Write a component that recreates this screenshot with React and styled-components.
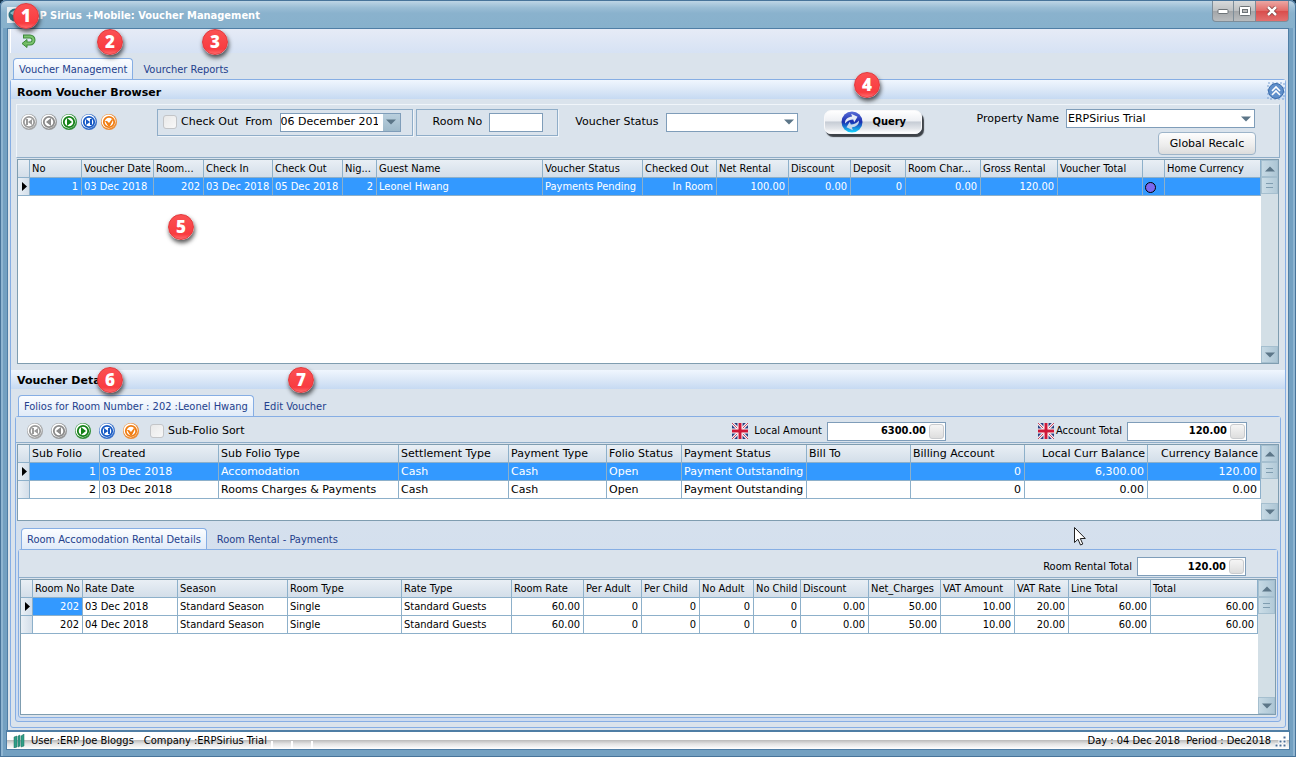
import React from "react";
import styled, { createGlobalStyle } from "styled-components";

const condensed = `"DejaVu Sans Condensed", "Noto Sans", sans-serif`;
const wide = `"DejaVu Sans", sans-serif`;

const GlobalStyle = createGlobalStyle`
  * {
    box-sizing: border-box;
  }
  body {
    margin: 0;
    background: #14324a;
    color: #000;
    font-family: ${condensed};
    font-size: 11px;
    line-height: 14px;
  }
  button, input, select {
    margin: 0;
    padding: 0;
    color: inherit;
    font: inherit;
  }
`;

const Window = styled.div`
  position: relative;
  display: flex;
  flex-direction: column;
  min-height: 100vh;
  padding: 0 7px 8px;
  border-radius: 6px 6px 0 0;
  background: #73a0c1;
  box-shadow: inset 0 0 0 1px #48749a, inset 2px 0 0 1px #8fb5d1,
    inset -2px 0 0 1px #8fb5d1;
`;
const TitleBar = styled.header`
  display: flex;
  align-items: flex-start;
  height: 28px;
  margin: 0 -6px;
  padding: 0 6px;
  border-top: 1px solid #48749a;
  border-radius: 6px 6px 0 0;
  background: linear-gradient(#bdd5e5, #9abdd5 25%, #8ab2cd 45%, #87b1cc);
`;
const Title = styled.h1`
  flex: 1;
  margin: 8px 0 0 2px;
  color: #fff;
  font-size: 11px;
  font-weight: bold;
  line-height: 14px;
`;
const AppIcon = styled.svg`
  width: 16px;
  height: 16px;
  margin-top: 6px;
`;
const WindowButton = styled.button`
  display: flex;
  align-items: center;
  justify-content: center;
  width: ${props => (props.$close ? "33px" : "22px")};
  height: 21px;
  border: 1px solid #7d8d99;
  border-top: 0;
  border-left-width: ${props => (props.$first ? "1px" : "0")};
  border-radius: ${props =>
    props.$close ? "0 0 4px 0" : props.$first ? "0 0 0 4px" : "0"};
  background: ${props =>
    props.$close
      ? "linear-gradient(#eba7a3, #e26a67 50%, #d94e4d 52%, #e2706f)"
      : "linear-gradient(#d8dadb, #bcbfc1 50%, #a3a6a9 52%, #b9bcbe)"};
`;

const Client = styled.main`
  display: flex;
  flex: 1;
  flex-direction: column;
  padding-bottom: 3px;
  border: 1px solid #4f7ea5;
  border-bottom: 0;
  background: #dae3ec;
`;
const Toolbar = styled.div`
  display: flex;
  align-items: center;
  height: 24px;
  margin-left: 2px;
  padding-left: 10px;
  border-left: 1px solid #fff;
  background: linear-gradient(#e6ebf6, #d6e2f4);
`;
const IconButton = styled.button`
  display: flex;
  width: 16px;
  height: 16px;
  border: 0;
  border-radius: 8px;
  background: none;
`;

const TabBar = styled.nav`
  display: flex;
  align-items: flex-end;
  height: ${props => props.$height}px;
  padding-left: ${props => props.$indent}px;
`;
const Tab = styled.button`
  height: 22px;
  margin-bottom: -1px;
  padding: ${props => (props.$active ? "1px 5px 0" : "1px 9px 0")};
  border: 1px solid ${props => (props.$active ? "#86aee4" : "transparent")};
  border-bottom: 0;
  border-radius: 4px 4px 0 0;
  background: ${props =>
    props.$active ? "linear-gradient(#fbfdff, #dfeaf8)" : "none"};
  color: #24418c;
  white-space: nowrap;
`;
const Pages = styled.section`
  display: flex;
  flex: ${props => (props.$grow ? "1" : "none")};
  flex-direction: column;
  margin: 0 ${props => props.$inset}px;
  padding-bottom: ${props => props.$foot}px;
  border: 1px solid #86aee4;
  border-radius: 3px;
  background: ${props => props.$back || "#dae3ec"};
  box-shadow: inset 0 1px 0 #eef4fc;
`;
const Band = styled.h2`
  height: 19px;
  margin: 0;
  padding: 6px 6px 0;
  background: linear-gradient(#f0f6fe, #dce8f7 50%, #c6daf2);
  font-family: ${wide};
  font-size: 11px;
  font-weight: bold;
  line-height: 14px;
`;
const DetailsHeading = styled(Band)`
  margin-top: 6px;
  padding-top: 4px;
`;
const BrowserHeader = styled.div`
  display: flex;
  justify-content: space-between;
  height: 19px;
  background: linear-gradient(#f0f6fe, #dce8f7 50%, #c6daf2);

  h2 {
    background: none;
  }
`;
const CollapseButton = styled.button`
  width: 18px;
  height: 18px;
  margin-top: 2px;
  border: 0;
  background: none;
`;

const Filters = styled.form`
  display: flex;
  align-items: flex-start;
  height: 54px;
  margin: 5px 5px 0;
  padding: 3px 23px 0 4px;
  border: 1px solid #8fadc8;
  border-top-color: #f0f5fa;
  border-left-color: #f0f5fa;
  font-family: ${wide};
`;
const FilterRow = styled.div`
  display: flex;
  flex: 1;
  align-items: center;
  height: 28px;
`;
const Navigator = styled.div`
  display: flex;
  gap: ${props => props.$gap}px;
`;
const Group = styled.div`
  display: flex;
  align-items: center;
  height: 27px;
  margin-left: ${props => (props.$first ? "40px" : "3px")};
  padding: ${props => (props.$first ? "0 11px 0 5px" : "0 14px 0 16px")};
  border: 1px solid #8fadc8;
  box-shadow: 1px 1px 0 #f0f5fa;
`;
const Label = styled.label`
  white-space: nowrap;
  margin-right: ${props => (props.$tight ? "5px" : "7px")};
`;
const Check = styled.input.attrs({ type: "checkbox" })`
  width: 14px;
  height: 14px;
  margin-right: 4px;
  appearance: none;
  border: 1px solid #c3c5c8;
  border-radius: 3px;
  background: linear-gradient(135deg, #e9e9e9, #f8f8f8);
`;
const DateBox = styled.div`
  display: flex;
  width: 121px;
  height: 19px;
  border: 1px solid #7f9db9;
  background: #fff;

  input {
    flex: 1;
    min-width: 0;
    padding-right: 5px;
    border: 0;
    background: none;
  }
`;
const DropButton = styled.button`
  width: 17px;
  border: 0;
  background: linear-gradient(#b9cfdd, #9fbacb);
`;
const TextBox = styled.input`
  width: 54px;
  height: 19px;
  border: 1px solid #7f9db9;
  background: #fff;
`;
const SelectBox = styled.div`
  display: flex;
  align-items: center;
  width: ${props => props.$width}px;
  height: 19px;
  padding-right: 3px;
  border: 1px solid #7f9db9;
  background: #fff;

  select {
    flex: 1;
    min-width: 0;
    height: 17px;
    padding-left: 1px;
    appearance: none;
    border: 0;
    background: none;
  }
`;
const StatusField = styled.div`
  display: flex;
  align-items: center;
  margin-left: 17px;
`;
const QueryButton = styled.button`
  display: flex;
  align-items: center;
  gap: 10px;
  width: 98px;
  height: 24px;
  margin-left: 26px;
  padding-left: 16px;
  border: 1px solid #f8f8fa;
  border-radius: 7px;
  background: linear-gradient(#fff, #eef0f4 45%, #c6ccd5 50%, #e2e5ea 80%, #fff);
  box-shadow: 2px 3px 1px #3d4248;
  font-family: ${condensed};
  font-weight: bold;
`;
const PropertyColumn = styled.div`
  display: flex;
  flex-direction: column;
  align-items: flex-end;
  gap: 4px;
  padding-top: 1px;
`;
const PropertyField = styled.div`
  display: flex;
  align-items: center;
  padding-right: 1px;
`;
const RecalcButton = styled.button`
  width: 98px;
  height: 23px;
  border: 1px solid #9db4c9;
  border-radius: 4px;
  background: linear-gradient(#fdfdfd, #ececec 60%, #dcdcdc);
`;

const GridFrame = styled.div`
  display: flex;
  flex: ${props => (props.$height ? "none" : "1")};
  min-height: ${props => props.$height || 120}px;
  margin: 1px ${props => props.$inset}px 0;
  border: 1px solid #7f9db0;
  background: #fff;
`;
const GridBody = styled.div`
  flex: 1;
  min-width: 0;
`;
const Table = styled.table`
  width: 100%;
  table-layout: fixed;
  border-collapse: separate;
  border-spacing: 0;
  font-family: ${props => (props.$wide ? wide : condensed)};
`;
const HeadCell = styled.th`
  height: 18px;
  padding: 1px ${props => (props.$right ? "2px" : "0")} 0 2px;
  overflow: hidden;
  border-right: 1px solid #8db0ca;
  border-bottom: 1px solid #8db0ca;
  background: linear-gradient(#e9eff5, #d3dee9);
  font-weight: normal;
  text-align: ${props => (props.$right ? "right" : "left")};
  text-overflow: ellipsis;
  white-space: nowrap;
`;
const Cell = styled.td`
  height: 18px;
  padding: 1px 3px 0 2px;
  overflow: hidden;
  border-right: 1px solid #8db0ca;
  border-bottom: 1px solid #8db0ca;
  background: ${props => (props.$selected ? "#3399ff" : "#fff")};
  color: ${props => (props.$selected ? "#fff" : "#000")};
  text-align: ${props => (props.$right ? "right" : "left")};
  white-space: nowrap;

  svg {
    display: block;
  }
`;
const Marker = styled(Cell)`
  padding: 0 0 0 4px;
  background: linear-gradient(90deg, #eaf0f6, #d3dee9);
`;

const Scroll = styled.div`
  display: flex;
  flex-direction: column;
  width: 17px;
  background: #d3dfe6;
`;
const ScrollButton = styled.button`
  display: flex;
  align-items: center;
  justify-content: center;
  height: 17px;
  border: 1px solid #a5bfcf;
  background: linear-gradient(90deg, #c6d9e4, #adc6d5);
  margin-top: ${props => (props.$down ? "auto" : "0")};
`;
const Thumb = styled.div`
  display: flex;
  align-items: center;
  justify-content: center;
  height: 17px;
  border: 1px solid #a5bfcf;
  background: linear-gradient(90deg, #cbdde7, #b2cad8);
`;

const DetailBar = styled.div`
  display: flex;
  align-items: center;
  height: ${props => (props.$tall ? "28px" : "26px")};
  padding: ${props => (props.$tall ? "6px 31px 0 11px" : "3px 33px 0 11px")};
  border-bottom: 1px solid #8fadc8;
  background: #dae3ec;
`;
const SortField = styled.div`
  display: flex;
  flex: 1;
  align-items: center;
  margin-left: 11px;
  font-family: ${wide};
`;
const Amount = styled.div`
  display: flex;
  align-items: center;
  margin-left: ${props => (props.$spaced ? "92px" : "0")};

  svg {
    margin-right: ${props => (props.$spaced ? "2px" : "6px")};
  }
`;
const AmountBox = styled.div`
  display: flex;
  align-items: center;
  width: ${props => props.$width}px;
  height: 19px;
  padding-right: 1px;
  border: 1px solid #7f9db9;
  background: #fff;
  font-weight: bold;

  input {
    flex: 1;
    min-width: 0;
    padding-right: 3px;
    border: 0;
    background: none;
    text-align: right;
  }
  button {
    width: 15px;
    height: 15px;
    border: 1px solid #c9cbce;
    border-radius: 3px;
    background: linear-gradient(#f5f5f5, #dedede);
  }
`;
const Spacer = styled.div`
  flex: 1;
`;

const StatusBar = styled.footer`
  display: flex;
  align-items: center;
  height: 18px;
  padding: 0 2px 0 6px;
  border-top: 1px solid #4f7ea5;
  background: linear-gradient(#fff 45%, #bfbfbf 50%, #e4e4e4 70%, #fff);
  outline: 1px solid #4f7ea5;
`;
const StatusText = styled.span`
  padding-left: 6px;
  margin-right: 4px;
`;
const StatusGap = styled.span`
  width: 20px;
  height: 9px;
  margin-top: 9px;
  border-left: 2px solid #fff;
`;

const Callout = styled.div`
  position: absolute;
  left: ${props => props.$x}px;
  top: ${props => props.$y}px;
  width: 26px;
  height: 26px;
  border: 1px solid #e0383b;
  border-radius: 13px;
  background: linear-gradient(#fb5153, #f93c40 80%, #ff6b6d);
  box-shadow: 1px 3px 4px rgba(20, 20, 20, 0.7);
  color: #fff;
  font-family: "Open Sans", sans-serif;
  font-size: 17px;
  font-weight: 800;
  line-height: 23px;
  text-align: center;
`;
const Pointer = styled.svg`
  position: absolute;
  left: 1074px;
  top: 527px;
  width: 12px;
  height: 19px;
`;

const navIcons = [
  { label: "First", color: "#9a9a9a", d: "M5 5h2v6H5zM11 5v6L7 8z" },
  { label: "Previous", color: "#8a8a8a", d: "M10 4v8L5 8z" },
  { label: "Next", color: "#128016", d: "M6 4v8l5-4z" },
  { label: "Last", color: "#1659c4", d: "M5 5v6l4-3zM9 5h2v6H9z" },
  { label: "Refresh", color: "#f07d12", d: "M4 7h2l2 2 3-4 1 1-3 6H7z" }
];

const NavButtons = ({ gap }) => (
  <Navigator $gap={gap}>
    {navIcons.map(icon => (
      <IconButton key={icon.label} type="button" aria-label={icon.label}>
        <svg width="16" height="16" viewBox="0 0 16 16">
          <circle cx="8" cy="8" r="8" fill={icon.color} opacity="0.85" />
          <circle cx="7.6" cy="7.4" r="7" fill="#fff" />
          <circle cx="8" cy="8" r="5.2" fill="#fff" stroke={icon.color} strokeWidth="1.8" />
          <path d={icon.d} fill={icon.color} />
        </svg>
      </IconButton>
    ))}
  </Navigator>
);

const Arrow = ({ up }) => (
  <svg width="10" height="6" viewBox="0 0 10 6">
    <path d={up ? "M0 5.5h10L5 .5z" : "M0 .5h10L5 5.5z"} fill="#5c7688" />
  </svg>
);

const Flag = () => (
  <svg width="16" height="16" viewBox="0 0 16 16">
    <rect width="16" height="16" rx="2" fill="#2b3f80" />
    <path d="M0 0l16 16M16 0L0 16" stroke="#f2eff4" strokeWidth="3" />
    <path d="M0 0l16 16M16 0L0 16" stroke="#cc4560" strokeWidth="1" />
    <path d="M8 0v16M0 8h16" stroke="#fff" strokeWidth="5" />
    <path d="M8 0v16M0 8h16" stroke="#cf1838" strokeWidth="3" />
  </svg>
);

const ScrollBar = () => (
  <Scroll>
    <ScrollButton type="button" aria-label="Scroll up">
      <Arrow up />
    </ScrollButton>
    <Thumb>
      <svg width="7" height="5" viewBox="0 0 7 5">
        <path d="M0 .5h7M0 4.5h7" stroke="#7f9db0" />
      </svg>
    </Thumb>
    <ScrollButton type="button" aria-label="Scroll down" $down>
      <Arrow />
    </ScrollButton>
  </Scroll>
);

// column: [title, width, cells are right aligned, title is right aligned]
const voucherColumns = [
  ["No", 52, true],
  ["Voucher Date", 72],
  ["Room...", 50, true],
  ["Check In", 69],
  ["Check Out", 70],
  ["Nig...", 34, true],
  ["Guest Name", 166],
  ["Voucher Status", 100],
  ["Checked Out", 74, true],
  ["Net Rental", 72, true],
  ["Discount", 62, true],
  ["Deposit", 55, true],
  ["Room Char...", 75, true],
  ["Gross Rental", 77, true],
  ["Voucher Total", 85, true],
  ["", 22],
  ["Home Currency"]
];
const dot = (
  <svg width="11" height="11" viewBox="0 0 11 11">
    <circle cx="5.5" cy="5.5" r="5" fill="#7b68ee" stroke="#000" />
  </svg>
);
const vouchers = [
  ["1", "03 Dec 2018", "202", "03 Dec 2018", "05 Dec 2018", "2", "Leonel Hwang",
    "Payments Pending", "In Room", "100.00", "0.00", "0", "0.00", "120.00", "", dot, ""]
];

const folioColumns = [
  ["Sub Folio", 70, true],
  ["Created", 119],
  ["Sub Folio Type", 180],
  ["Settlement Type", 110],
  ["Payment Type", 98],
  ["Folio Status", 75],
  ["Payment Status", 125],
  ["Bill To", 104],
  ["Billing Account", 114, true],
  ["Local Curr Balance", 123, true, true],
  ["Currency Balance", undefined, true, true]
];
const folios = [
  ["1", "03 Dec 2018", "Accomodation", "Cash", "Cash", "Open",
    "Payment Outstanding", "", "0", "6,300.00", "120.00"],
  ["2", "03 Dec 2018", "Rooms Charges & Payments", "Cash", "Cash", "Open",
    "Payment Outstanding", "", "0", "0.00", "0.00"]
];

const rentalColumns = [
  ["Room No", 50, true],
  ["Rate Date", 95],
  ["Season", 110],
  ["Room Type", 114],
  ["Rate Type", 110],
  ["Room Rate", 72, true],
  ["Per Adult", 58, true],
  ["Per Child", 58, true],
  ["No Adult", 54, true],
  ["No Child", 47, true],
  ["Discount", 68, true],
  ["Net_Charges", 72, true],
  ["VAT Amount", 74, true],
  ["VAT Rate", 54, true],
  ["Line Total", 82, true],
  ["Total", undefined, true]
];
const rentals = ["03 Dec 2018", "04 Dec 2018"].map(date => [
  "202", date, "Standard Season", "Single", "Standard Guests", "60.00",
  "0", "0", "0", "0", "0.00", "50.00", "10.00", "20.00", "60.00", "60.00"
]);

const DataGrid = ({ columns, rows, height, inset, isWide, cellSelect }) => (
  <GridFrame $height={height} $inset={inset}>
    <GridBody>
      <Table $wide={isWide}>
        <colgroup>
          <col width="12" />
          {columns.map((col, i) => (
            <col key={i} width={col[1]} />
          ))}
        </colgroup>
        <thead>
          <tr>
            <HeadCell />
            {columns.map((col, i) => (
              <HeadCell key={i} $right={col[3]}>
                {col[0]}
              </HeadCell>
            ))}
          </tr>
        </thead>
        <tbody>
          {rows.map((row, r) => (
            <tr key={r}>
              <Marker>
                {r === 0 && (
                  <svg width="5" height="9" viewBox="0 0 5 9">
                    <path d="M0 0v9l5-4.5z" />
                  </svg>
                )}
              </Marker>
              {row.map((value, i) => (
                <Cell
                  key={i}
                  $right={columns[i][2]}
                  $selected={r === 0 && (!cellSelect || i === 0)}
                >
                  {value}
                </Cell>
              ))}
            </tr>
          ))}
        </tbody>
      </Table>
    </GridBody>
    <ScrollBar />
  </GridFrame>
);

const AmountField = ({ id, label, value, width, spaced, flag }) => (
  <Amount $spaced={spaced}>
    {flag && <Flag />}
    <Label htmlFor={id} $tight>
      {label}
    </Label>
    <AmountBox $width={width}>
      <input id={id} defaultValue={value} />
      <button type="button" aria-label={`${label} calculator`} />
    </AmountBox>
  </Amount>
);

const callouts = [
  [13, 3], [97, 29], [202, 29], [854, 72], [168, 214], [97, 367], [288, 367]
];

export default function App() {
  return (
    <Window>
      <GlobalStyle />
      <TitleBar>
        <AppIcon viewBox="0 0 16 16">
          <rect width="16" height="16" fill="#e8eef2" />
          <circle cx="8" cy="8" r="6.5" fill="#2f7080" />
          <path d="M3 6l5-3 3 3-4 3z" fill="#8fc3cc" />
        </AppIcon>
        <Title>ERP Sirius +Mobile: Voucher Management</Title>
        <WindowButton $first aria-label="Minimize">
          <svg width="12" height="5" viewBox="0 0 12 5">
            <rect x="1" y=".5" width="10" height="4" rx="1" fill="#fff" stroke="#6d7377" />
          </svg>
        </WindowButton>
        <WindowButton aria-label="Maximize">
          <svg width="12" height="10" viewBox="0 0 12 10">
            <rect x=".5" y=".5" width="11" height="9" rx="1" fill="#fff" stroke="#6d7377" />
            <rect x="3.5" y="3.5" width="5" height="3" fill="#bbb" stroke="#6d7377" />
          </svg>
        </WindowButton>
        <WindowButton $close aria-label="Close">
          <svg width="12" height="10" viewBox="0 0 12 10">
            <path d="M2 1l8 8M10 1L2 9" stroke="#7b3b3b" strokeWidth="4" />
            <path d="M2 1l8 8M10 1L2 9" stroke="#fff" strokeWidth="2.5" />
          </svg>
        </WindowButton>
      </TitleBar>

      <Client>
        <Toolbar>
          <IconButton aria-label="Back">
            <svg width="16" height="16" viewBox="0 0 16 16">
              <path
                d="M2 3.5h7a3.5 3.5 0 0 1 0 7H5"
                fill="none"
                stroke="#3d8a3a"
                strokeWidth="4"
              />
              <path d="M6 6.5v8l-5-4z" fill="#6fbb63" stroke="#3d8a3a" />
              <path
                d="M3 3.5h6a3.5 3.5 0 0 1 0 7H5"
                fill="none"
                stroke="#7cc470"
                strokeWidth="2"
              />
            </svg>
          </IconButton>
        </Toolbar>
        <TabBar $height={26} $indent={5}>
          <Tab $active>Voucher Management</Tab>
          <Tab>Vourcher Reports</Tab>
        </TabBar>

        <Pages $grow $inset={2} $foot={5}>
          <BrowserHeader>
            <Band>Room Voucher Browser</Band>
            <CollapseButton aria-label="Collapse">
              <svg width="18" height="18" viewBox="0 0 18 18">
                <rect x="1" y="1" width="16" height="16" fill="none" stroke="#7aa0d0" strokeDasharray="2 2" />
                <circle cx="9" cy="9" r="7.5" fill="#5f8fcb" stroke="#3a6cab" />
                <path d="M5 9l4-4 4 4M5 13l4-4 4 4" fill="none" stroke="#fff" strokeWidth="1.6" />
              </svg>
            </CollapseButton>
          </BrowserHeader>

          <Filters onSubmit={e => e.preventDefault()}>
            <FilterRow>
              <NavButtons gap={4} />
              <Group $first>
                <Check id="checkout" />
                <Label htmlFor="checkout">Check Out</Label>
                <Label htmlFor="from">From</Label>
                <DateBox>
                  <input id="from" defaultValue="06 December 2018" />
                  <DropButton type="button" aria-label="Open calendar">
                    <Arrow />
                  </DropButton>
                </DateBox>
              </Group>
              <Group>
                <Label htmlFor="room">Room No</Label>
                <TextBox id="room" />
              </Group>
              <StatusField>
                <Label htmlFor="status">Voucher Status</Label>
                <SelectBox $width={132}>
                  <select id="status">
                    <option />
                  </select>
                  <Arrow />
                </SelectBox>
              </StatusField>
              <QueryButton>
                <svg width="22" height="22" viewBox="0 0 22 22">
                  <defs>
                    <linearGradient id="orb" x2="0" y2="1">
                      <stop offset="0" stopColor="#5a6fd8" />
                      <stop offset="0.5" stopColor="#1a2fb0" />
                      <stop offset="1" stopColor="#16d8ff" />
                    </linearGradient>
                  </defs>
                  <circle cx="11" cy="11" r="10.5" fill="url(#orb)" />
                  <g transform="rotate(-20 11 11)">
                    <path d="M4 10c1-4 5-5 9-4V3l5 5-5 4V9c-3-1-6-1-9 1z" fill="#e6ecf6" />
                    <path d="M18 12c-1 4-5 5-9 4v3l-5-5 5-4v3c3 1 6 1 9-1z" fill="#c9d8ec" />
                  </g>
                </svg>
                Query
              </QueryButton>
            </FilterRow>
            <PropertyColumn>
              <PropertyField>
                <Label htmlFor="property">Property Name</Label>
                <SelectBox $width={189}>
                  <select id="property">
                    <option>ERPSirius Trial</option>
                  </select>
                  <Arrow />
                </SelectBox>
              </PropertyField>
              <RecalcButton type="button">Global Recalc</RecalcButton>
            </PropertyColumn>
          </Filters>

          <DataGrid columns={voucherColumns} rows={vouchers} inset={6} />

          <DetailsHeading>Voucher Details</DetailsHeading>
          <TabBar $height={27} $indent={7}>
            <Tab $active>Folios for Room Number : 202 :Leonel Hwang</Tab>
            <Tab>Edit Voucher</Tab>
          </TabBar>

          <Pages $inset={4} $foot={3} $back="linear-gradient(#dae3ec, #ccdbf0)">
            <DetailBar>
              <NavButtons gap={8} />
              <SortField>
                <Check id="sort" />
                <Label htmlFor="sort">Sub-Folio Sort</Label>
              </SortField>
              <AmountField id="local" label="Local Amount" value="6300.00" width={119} flag />
              <AmountField id="account" label="Account Total" value="120.00" width={120} flag spaced />
            </DetailBar>
            <DataGrid columns={folioColumns} rows={folios} height={77} inset={1} isWide />

            <TabBar $height={28} $indent={5}>
              <Tab $active>Room Accomodation Rental Details</Tab>
              <Tab>Room Rental - Payments</Tab>
            </TabBar>
            <Pages $inset={2} $foot={2}>
              <DetailBar $tall>
                <Spacer />
                <AmountField id="rental" label="Room Rental Total" value="120.00" width={109} />
              </DetailBar>
              <DataGrid columns={rentalColumns} rows={rentals} height={136} inset={1} cellSelect />
            </Pages>
          </Pages>
        </Pages>
      </Client>

      <StatusBar>
        <svg width="12" height="14" viewBox="0 0 12 14">
          <path d="M1 3l3-1v11l-3 1zM5 2l2-1v11l-2 1zM8 2l3-2v12l-3 1z" fill="#2f9e86" stroke="#1c6f60" strokeWidth=".5" />
        </svg>
        <StatusText>User :ERP Joe Bloggs</StatusText>
        <StatusText>Company :ERPSirius Trial</StatusText>
        <StatusGap />
        <StatusGap />
        <StatusGap />
        <Spacer />
        <StatusText>Day : 04 Dec 2018&nbsp; Period : Dec2018</StatusText>
        <svg width="12" height="12" viewBox="0 0 12 12">
          <path d="M8 1h3v3H8zM4 5h3v3H4zM8 5h3v3H8zM0 9h3v3H0zM4 9h3v3H4zM8 9h3v3H8z" fill="#4a6d95" stroke="#fff" />
        </svg>
      </StatusBar>

      {callouts.map(([x, y], i) => (
        <Callout key={i} $x={x} $y={y}>
          {i + 1}
        </Callout>
      ))}
      <Pointer viewBox="0 0 12 19">
        <path d="M.5.5v15l3.5-3.3 2.5 5.8 2.3-1-2.5-5.5h5z" fill="#fff" stroke="#222" />
      </Pointer>
    </Window>
  );
}
